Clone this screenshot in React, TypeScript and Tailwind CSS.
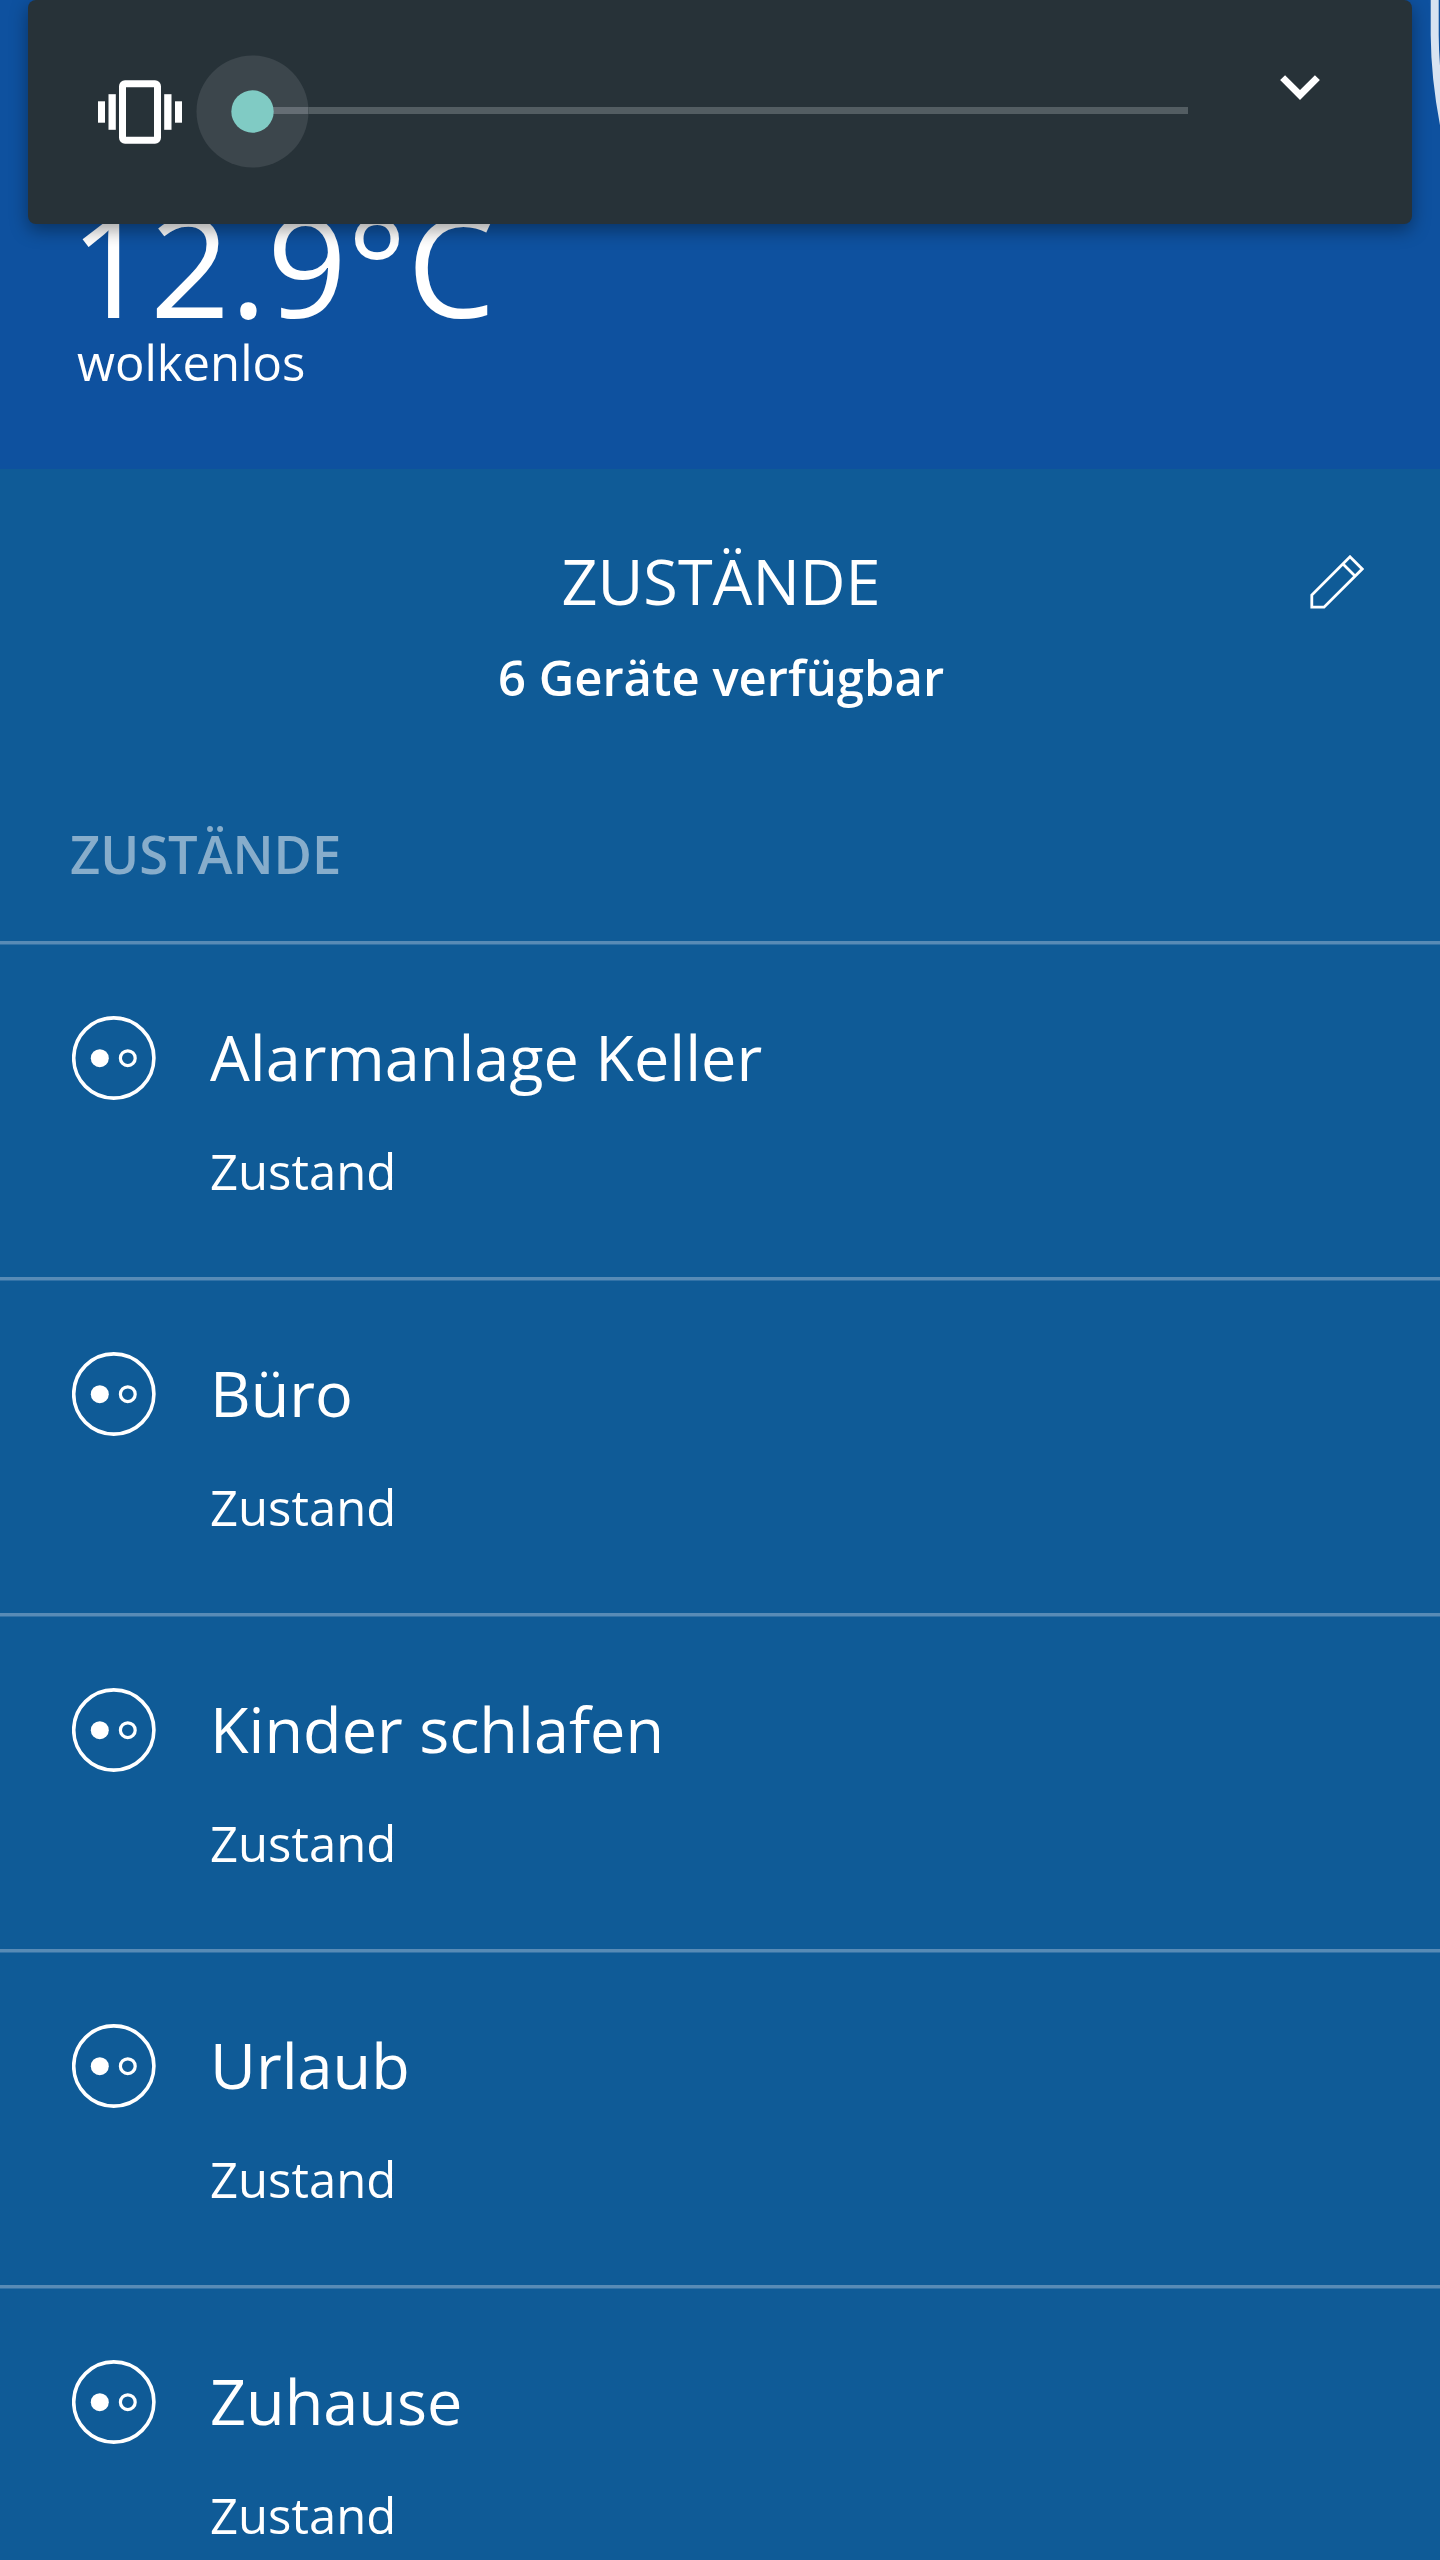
const devices = ['Alarmanlage Keller', 'Büro', 'Kinder schlafen', 'Urlaub', 'Zuhause'];

function Divider() {
  return (
    <div>
      <div className="h-[3px] bg-[#588bb6]" />
      <div className="h-px bg-[#3272a7]" />
    </div>
  );
}

function StateIcon() {
  return (
    <svg className="mt-px size-[84px] shrink-0" viewBox="0 0 84 84" fill="none" stroke="white">
      <circle cx="41.8" cy="42" r="40.1" strokeWidth="3.6" />
      <circle cx="27.8" cy="42.2" r="9" fill="white" stroke="none" />
      <circle cx="55.8" cy="42.2" r="7.4" strokeWidth="3.2" />
    </svg>
  );
}

function DeviceRow({ name }: { name: string }) {
  return (
    <li className="h-[336px] shrink-0">
      <Divider />
      <div className="flex gap-[54px] pl-[72px] pt-[70px]">
        <StateIcon />
        <div className="whitespace-nowrap">
          <div className="text-[63px] leading-[84px]">{name}</div>
          <div className="mt-[40px] text-[49px] leading-[64px]">Zustand</div>
        </div>
      </div>
    </li>
  );
}

function VolumePanel() {
  return (
    <div className="absolute left-[28px] top-0 flex h-[224px] w-[1384px] rounded-[8px] bg-[#273238] shadow-[0_6px_18px_rgba(0,0,0,0.38)]">
      <svg className="ml-[70px] mt-[80px] h-[64px] w-[84px] shrink-0" viewBox="0 0 84 64" fill="white">
        <rect x="0" y="21.3" width="7" height="21.4" />
        <rect x="10.5" y="14.2" width="7.3" height="35.6" />
        <rect x="66.2" y="14.2" width="7.3" height="35.6" />
        <rect x="77" y="21.3" width="7" height="21.4" />
        <rect x="24.5" y="3.7" width="35" height="56.5" rx="2.5" fill="none" stroke="white" strokeWidth="7" />
      </svg>
      <svg className="ml-[14px] mt-[55px] h-[113px] w-[993px] shrink-0" viewBox="0 0 993 113">
        <rect x="56" y="52" width="936" height="7" fill="#535d62" />
        <circle cx="56.5" cy="56.5" r="56" fill="#3c464c" />
        <rect x="56" y="52" width="56" height="7" fill="#656d74" />
        <circle cx="56.5" cy="56.5" r="21.2" fill="#80cbc4" />
      </svg>
      <svg className="ml-[91px] mt-[74px] h-[26px] w-[40px] shrink-0" viewBox="0 0 40 26" fill="none" stroke="white" strokeWidth="7">
        <path d="M2.6 3.6 20 21 37.4 3.6" />
      </svg>
    </div>
  );
}

export default function App() {
  return (
    <div className="relative flex h-[2560px] w-[1440px] flex-col overflow-hidden bg-[#0f5b97] font-['Open_Sans',sans-serif] text-white">
      <section className="h-[469px] shrink-0 bg-[#0e519f] pl-[77px] pt-[196px]">
        <div className="-ml-[7px] text-[140px] leading-[136px]">12.9°C</div>
        <div className="text-[49px] leading-[60px]">wolkenlos</div>
        <svg className="absolute right-0 top-0 h-[140px] w-[20px]" viewBox="0 0 20 140" fill="none">
          <path d="M14.7 0V35Q15 80 25 130" stroke="#d8e3f1" strokeWidth="8" />
        </svg>
      </section>
      <header className="grid h-[472px] shrink-0 grid-cols-[1fr_auto_1fr] grid-rows-[auto_auto_1fr] pt-[70px]">
        <h1 className="col-start-2 pl-[2px] text-center text-[63px] leading-[84px]">ZUSTÄNDE</h1>
        <svg className="mr-[76px] mt-[16px] h-[54px] w-[54px] justify-self-end" viewBox="0 0 54 54" fill="none" stroke="white" strokeWidth="2.8">
          <path d="M1.8 52.2V40L40 1.8 52.2 14 14 52.2ZM33 9 45 21" />
        </svg>
        <div className="col-start-2 mt-[22px] pl-[2px] text-center text-[49px] font-semibold leading-[64px]">6 Geräte verfügbar</div>
        <h2 className="col-span-3 row-start-3 mb-[50px] self-end pl-[70px] text-[52.5px] font-semibold leading-[74px] text-[#87adcb]">ZUSTÄNDE</h2>
      </header>
      <ul className="flex flex-col">
        {devices.map((name) => (
          <DeviceRow key={name} name={name} />
        ))}
      </ul>
      <VolumePanel />
    </div>
  );
}
